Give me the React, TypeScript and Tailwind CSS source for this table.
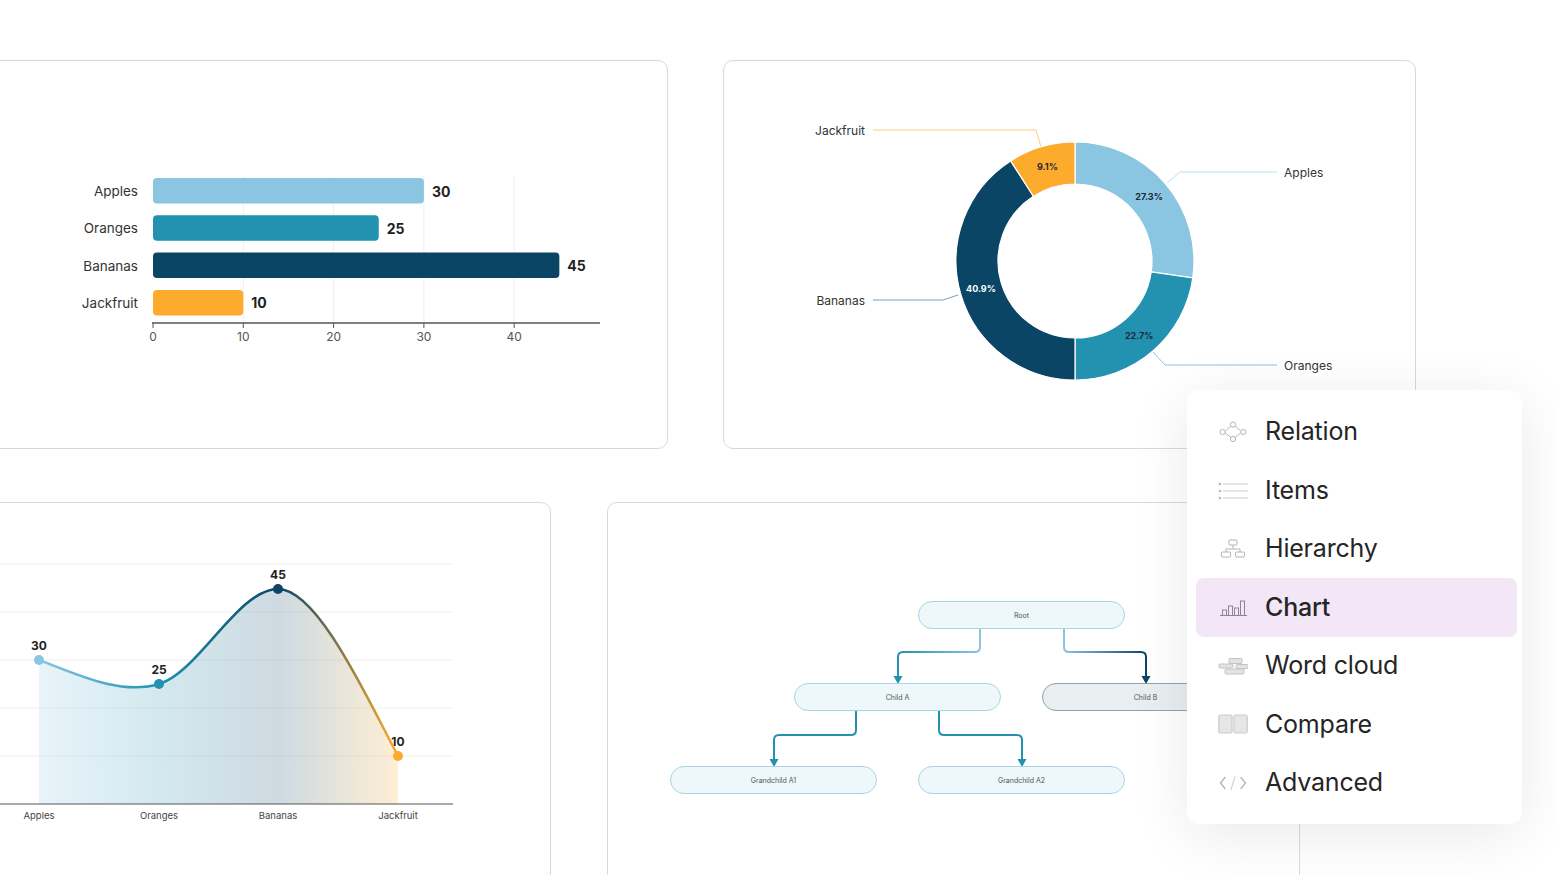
import React from "react";

const C = { apples: "#8AC5E2", oranges: "#2292B0", bananas: "#0B4566", jack: "#FDAB2C" };

const fruits = [
  { name: "Apples", value: 30, color: C.apples },
  { name: "Oranges", value: 25, color: C.oranges },
  { name: "Bananas", value: 45, color: C.bananas },
  { name: "Jackfruit", value: 10, color: C.jack },
];

const font = "Inter, 'Noto Sans', sans-serif";

const Card = ({ children, shift }: { children: React.ReactNode; shift: string }) => (
  <div className="h-[389px] w-[693px] shrink-0 overflow-hidden rounded-[10px] border border-[#d9d9d9] bg-white">
    <svg width="691" height="460" className="block" style={{ fontFamily: font }}>
      <g transform={shift}>{children}</g>
    </svg>
  </div>
);

// bar chart, drawn in page coordinates
const BarChart = () => {
  const x0 = 153;
  const unit = 9.03;
  return (
    <>
      {[1, 2, 3, 4].map((i) => (
        <line key={i} x1={x0 + i * 90.3} x2={x0 + i * 90.3} y1={176} y2={322} stroke="#efefef" />
      ))}
      {fruits.map((f, i) => {
        const y = 178 + i * 37.3;
        const w = f.value * unit;
        return (
          <g key={f.name}>
            <text x={138} y={y + 13} textAnchor="end" dominantBaseline="central" fontSize="13.5" fill="#333">
              {f.name}
            </text>
            <rect x={x0} y={y} width={w} height={25.5} rx={4} fill={f.color} />
            <text x={x0 + w + 8} y={y + 13} dominantBaseline="central" fontSize="14" fontWeight="700" fill="#222">
              {f.value}
            </text>
          </g>
        );
      })}
      <line x1={152} x2={600} y1={323} y2={323} stroke="#555" strokeWidth="1.5" />
      {[0, 1, 2, 3, 4].map((i) => (
        <g key={i}>
          <line x1={x0 + i * 90.3} x2={x0 + i * 90.3} y1={323} y2={328} stroke="#555" />
          <text x={x0 + i * 90.3} y={336} textAnchor="middle" dominantBaseline="central" fontSize="12" fill="#555">
            {i * 10}
          </text>
        </g>
      ))}
    </>
  );
};

const pt = (cx: number, cy: number, r: number, a: number) => {
  const rad = (a * Math.PI) / 180;
  return [cx + r * Math.sin(rad), cy - r * Math.cos(rad)];
};

const arc = (cx: number, cy: number, r0: number, r1: number, a0: number, a1: number) => {
  const large = a1 - a0 > 180 ? 1 : 0;
  const [x1, y1] = pt(cx, cy, r1, a0);
  const [x2, y2] = pt(cx, cy, r1, a1);
  const [x3, y3] = pt(cx, cy, r0, a1);
  const [x4, y4] = pt(cx, cy, r0, a0);
  return `M${x1} ${y1} A${r1} ${r1} 0 ${large} 1 ${x2} ${y2} L${x3} ${y3} A${r0} ${r0} 0 ${large} 0 ${x4} ${y4}Z`;
};

const Donut = () => {
  const cx = 1075;
  const cy = 261;
  const total = 110;
  let acc = 0;
  const segs = fruits.map((f) => {
    const a0 = (acc / total) * 360;
    acc += f.value;
    const a1 = (acc / total) * 360;
    return { ...f, a0, a1 };
  });
  return (
    <>
      <polyline points="873,130 1036,130 1041,147" fill="none" stroke="#FDCB7E" />
      <polyline points="1167,183 1180,172 1277,172" fill="none" stroke="#BFE0EF" />
      <polyline points="873,300 943,300 958,295" fill="none" stroke="#7E9FB2" />
      <polyline points="1153,352 1165,365 1277,365" fill="none" stroke="#8CC6D8" />
      {segs.map((s) => (
        <path key={s.name} d={arc(cx, cy, 77, 119, s.a0, s.a1)} fill={s.color} stroke="#fff" strokeWidth="1.2" />
      ))}
      {segs.map((s) => {
        const [x, y] = pt(cx, cy, 98, (s.a0 + s.a1) / 2);
        return (
          <text
            key={s.name}
            x={x}
            y={y}
            textAnchor="middle"
            dominantBaseline="central"
            fontSize="9"
            fontWeight="700"
            fill={s.name === "Bananas" ? "#fff" : "#1d2a33"}
          >
            {((s.value / total) * 100).toFixed(1)}%
          </text>
        );
      })}
      <text x={865} y={130} textAnchor="end" dominantBaseline="central" fontSize="12" fill="#333">Jackfruit</text>
      <text x={865} y={300} textAnchor="end" dominantBaseline="central" fontSize="12" fill="#333">Bananas</text>
      <text x={1284} y={172} dominantBaseline="central" fontSize="12" fill="#333">Apples</text>
      <text x={1284} y={365} dominantBaseline="central" fontSize="12" fill="#333">Oranges</text>
    </>
  );
};

const LineChart = () => {
  const pts = [
    { ...fruits[0], x: 39, y: 660 },
    { ...fruits[1], x: 159, y: 684 },
    { ...fruits[2], x: 278, y: 589 },
    { ...fruits[3], x: 398, y: 756 },
  ];
  const curve = "M39 660 C72 672 119 696 159 684 C199 672 238 589 278 589 C318 589 368 700 398 756";
  return (
    <>
      <defs>
        <linearGradient id="lineGrad" gradientUnits="userSpaceOnUse" x1="39" y1="0" x2="398" y2="0">
          <stop offset="0" stopColor={C.apples} />
          <stop offset="0.33" stopColor={C.oranges} />
          <stop offset="0.67" stopColor={C.bananas} />
          <stop offset="1" stopColor={C.jack} />
        </linearGradient>
      </defs>
      {[564, 612, 660, 708, 756].map((y) => (
        <line key={y} x1={-10} x2={453} y1={y} y2={y} stroke="#f0f0f0" />
      ))}
      <path d={`${curve} L398 804 L39 804Z`} fill="url(#lineGrad)" opacity="0.2" />
      <path d={curve} fill="none" stroke="url(#lineGrad)" strokeWidth="2.5" />
      <line x1={-10} x2={453} y1={804} y2={804} stroke="#555" strokeWidth="1.2" />
      {pts.map((p) => (
        <g key={p.name}>
          <circle cx={p.x} cy={p.y} r={5} fill={p.color} />
          <text x={p.x} y={p.y - 15} textAnchor="middle" dominantBaseline="central" fontSize="12" fontWeight="700" fill="#222">
            {p.value}
          </text>
          <text x={p.x} y={815} textAnchor="middle" dominantBaseline="central" fontSize="9.5" fill="#444">
            {p.name}
          </text>
        </g>
      ))}
    </>
  );
};

const Node = ({ x, y, label, gray }: { x: number; y: number; label: string; gray?: boolean }) => (
  <g>
    <rect
      x={x + 0.5}
      y={y + 0.5}
      width={206}
      height={27}
      rx={13.5}
      fill={gray ? "#e9eef1" : "#eef7fa"}
      stroke={gray ? "#8fa3ae" : "#a9d6e4"}
    />
    <text x={x + 103.5} y={y + 14} textAnchor="middle" dominantBaseline="central" fontSize="7" fill="#555">
      {label}
    </text>
  </g>
);

const Arrow = ({ x, y, color }: { x: number; y: number; color: string }) => (
  <polygon points={`${x - 4.5},${y - 8} ${x + 4.5},${y - 8} ${x},${y}`} fill={color} />
);

const Hierarchy = () => (
  <>
    <defs>
      <linearGradient id="gA" gradientUnits="userSpaceOnUse" x1="980" y1="0" x2="898" y2="0">
        <stop offset="0" stopColor={C.apples} />
        <stop offset="1" stopColor={C.oranges} />
      </linearGradient>
      <linearGradient id="gB" gradientUnits="userSpaceOnUse" x1="1064" y1="0" x2="1146" y2="0">
        <stop offset="0" stopColor={C.apples} />
        <stop offset="1" stopColor={C.bananas} />
      </linearGradient>
    </defs>
    <path d="M980 629 V647 Q980 652 975 652 H903 Q898 652 898 657 V677" fill="none" stroke="url(#gA)" strokeWidth="2" />
    <Arrow x={898} y={684} color={C.oranges} />
    <path d="M1064 629 V647 Q1064 652 1069 652 H1141 Q1146 652 1146 657 V677" fill="none" stroke="url(#gB)" strokeWidth="2" />
    <Arrow x={1146} y={684} color={C.bananas} />
    <path d="M856 711 V730 Q856 735 851 735 H779 Q774 735 774 740 V760" fill="none" stroke={C.oranges} strokeWidth="2" />
    <Arrow x={774} y={767} color={C.oranges} />
    <path d="M939 711 V730 Q939 735 944 735 H1017 Q1022 735 1022 740 V760" fill="none" stroke={C.oranges} strokeWidth="2" />
    <Arrow x={1022} y={767} color={C.oranges} />
    <Node x={918} y={601} label="Root" />
    <Node x={794} y={683} label="Child A" />
    <Node x={1042} y={683} label="Child B" gray />
    <Node x={670} y={766} label="Grandchild A1" />
    <Node x={918} y={766} label="Grandchild A2" />
  </>
);

const g = "#b4b4b4";

const icons: Record<string, React.ReactNode> = {
  Relation: (
    <svg width="30" height="24" viewBox="0 0 30 24" fill="none" stroke={g} strokeWidth="1">
      <path d="M7.5 11 L12.8 6 M7.5 13 L12.8 17.5 M17.2 6 L22.5 11 M17.2 17.5 L22.5 13" />
      <circle cx="4.7" cy="12" r="2.6" />
      <circle cx="15" cy="4.5" r="2.6" />
      <circle cx="25.3" cy="12" r="2.6" />
      <circle cx="15" cy="19" r="2.6" />
    </svg>
  ),
  Items: (
    <svg width="30" height="24" viewBox="0 0 30 24" fill="none" stroke="#cdcdcd" strokeWidth="1">
      <path d="M5 5 H30 M5 12 H30 M5 19 H30" />
      <circle cx="2" cy="5" r="1.3" fill="#bbb" stroke="none" />
      <circle cx="2" cy="12" r="1.3" fill="#bbb" stroke="none" />
      <circle cx="2" cy="19" r="1.3" fill="#bbb" stroke="none" />
    </svg>
  ),
  Hierarchy: (
    <svg width="30" height="24" viewBox="0 0 30 24" fill="none" stroke={g} strokeWidth="1">
      <rect x="11" y="3" width="8" height="5" rx="1" />
      <path d="M15 8 V12 M8 12 H22 M8 12 V15 M22 12 V15" />
      <rect x="3.5" y="15" width="9" height="5" rx="1" />
      <rect x="17.5" y="15" width="9" height="5" rx="1" />
    </svg>
  ),
  Chart: (
    <svg width="30" height="24" viewBox="0 0 30 24" fill="none" stroke="#8d849b" strokeWidth="1">
      <path d="M2 20.5 H29" />
      <rect x="4.5" y="15" width="4" height="5.5" />
      <rect x="10.5" y="11" width="4" height="9.5" />
      <rect x="16.5" y="13" width="4" height="7.5" />
      <rect x="22.5" y="6" width="4" height="14.5" />
    </svg>
  ),
  "Word cloud": (
    <svg width="30" height="24" viewBox="0 0 30 24" fill="#e3e3e3" stroke="#c4c4c4" strokeWidth="1">
      <rect x="11" y="4.5" width="13" height="5" rx="1" />
      <rect x="1" y="10" width="14" height="4" rx="1" />
      <rect x="18" y="10.5" width="12" height="4" rx="1" />
      <rect x="7" y="15" width="19" height="5" rx="1" />
    </svg>
  ),
  Compare: (
    <svg width="30" height="24" viewBox="0 0 30 24" fill="#e6e6e6" stroke="#cbcbcb" strokeWidth="1.2">
      <rect x="0.8" y="3" width="13.2" height="18" rx="1.5" />
      <rect x="16" y="3" width="13.2" height="18" rx="1.5" />
    </svg>
  ),
  Advanced: (
    <svg width="30" height="24" viewBox="0 0 30 24" fill="none" strokeWidth="1.3" strokeLinecap="round">
      <path d="M7 6.5 L2.5 12 L7 17.5 M23 6.5 L27.5 12 L23 17.5" stroke={g} />
      <path d="M17 5.5 L13 18.5" stroke="#d6d6d6" />
    </svg>
  ),
};

const menu = ["Relation", "Items", "Hierarchy", "Chart", "Word cloud", "Compare", "Advanced"];

const Menu = () => (
  <div className="absolute left-[1187px] top-[390px] flex h-[434px] w-[335px] flex-col rounded-[12px] bg-white pb-[12px] pl-[9px] pr-[5px] pt-[13px] shadow-[0_10px_60px_rgba(0,0,0,0.09)]">
    {menu.map((m) => (
      <div
        key={m}
        className={`flex h-[58.5px] items-center gap-[17px] rounded-[8px] pl-[22px] ${
          m === "Chart" ? "bg-[#f3e6f6]" : ""
        }`}
      >
        <span className="flex w-[30px] justify-center">{icons[m]}</span>
        <span
          className={`font-['Inter'] text-[25px] tracking-[-0.2px] text-[#252525] ${
            m === "Chart" ? "font-medium" : "font-normal"
          }`}
        >
          {m}
        </span>
      </div>
    ))}
  </div>
);

export default function App() {
  return (
    <div className="relative h-[875px] w-full overflow-hidden bg-white">
      <div className="flex flex-col gap-[53px] pt-[60px]">
        <div className="ml-[-25px] flex gap-[55px]">
          <Card shift="translate(24,-61)">
            <BarChart />
          </Card>
          <Card shift="translate(-724,-61)">
            <Donut />
          </Card>
        </div>
        <div className="ml-[-142px] flex gap-[56px]">
          <Card shift="translate(141,-503)">
            <LineChart />
          </Card>
          <Card shift="translate(-608,-503)">
            <Hierarchy />
          </Card>
        </div>
      </div>
      <Menu />
    </div>
  );
}
